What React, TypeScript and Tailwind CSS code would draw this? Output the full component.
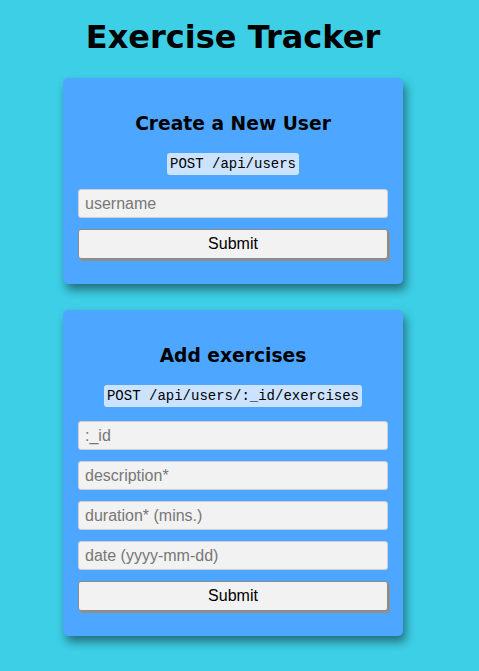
import React from 'react'

const sans = { fontFamily: '"DejaVu Sans", Verdana, sans-serif' }

const Field = ({ placeholder }: { placeholder: string }) => (
  <input
    type="text"
    placeholder={placeholder}
    className="block w-full h-[29px] px-[6px] bg-[#f2f2f2] border border-[#cfcfcf] rounded-[3px] text-[16px] text-black placeholder:text-[#777777] outline-none"
    style={{ fontFamily: '"Liberation Sans", Arial, sans-serif' }}
  />
)

const SubmitButton = () => (
  <button
    type="button"
    className="block w-full h-[30px] mt-[11px] bg-[#f2f2f2] border border-[#8a8a8a] rounded-[3px] text-[16px] text-black shadow-[2px_2px_0_#8f8f8f]"
    style={{ fontFamily: '"Liberation Sans", Arial, sans-serif' }}
  >
    Submit
  </button>
)

const Card = ({
  title,
  endpoint,
  fields,
}: {
  title: string
  endpoint: string
  fields: string[]
}) => (
  <div className="w-[340px] bg-[#4da6ff] rounded-[5px] pt-[35px] pb-[25px] px-[15px] shadow-[3px_6px_10px_rgba(0,0,0,0.45)]">
    <h3 className="text-center text-[18.7px] leading-[22px] font-bold text-black" style={sans}>
      {title}
    </h3>
    <div className="flex justify-center mt-[18px]">
      <code
        className="h-[22px] leading-[22px] px-[3px] bg-[#cce3ff] rounded-[3px] text-[14px] text-black"
        style={{ fontFamily: '"Liberation Mono", "DejaVu Sans Mono", monospace' }}
      >
        {endpoint}
      </code>
    </div>
    <div className="mt-[14px] flex flex-col gap-[11px]">
      {fields.map((f) => (
        <Field key={f} placeholder={f} />
      ))}
    </div>
    <SubmitButton />
  </div>
)

export default function App() {
  return (
    <div className="min-h-[671px] bg-[#3dcfe6] pb-10">
      <div className="w-[466px] flex flex-col items-center">
        <h1 className="pt-[17px] text-[32px] leading-[40px] font-bold text-black" style={sans}>
          Exercise Tracker
        </h1>
        <div className="mt-[21px] flex flex-col gap-[26px]">
          <Card title="Create a New User" endpoint="POST /api/users" fields={['username']} />
          <Card
            title="Add exercises"
            endpoint="POST /api/users/:_id/exercises"
            fields={[':_id', 'description*', 'duration* (mins.)', 'date (yyyy-mm-dd)']}
          />
        </div>
      </div>
    </div>
  )
}
